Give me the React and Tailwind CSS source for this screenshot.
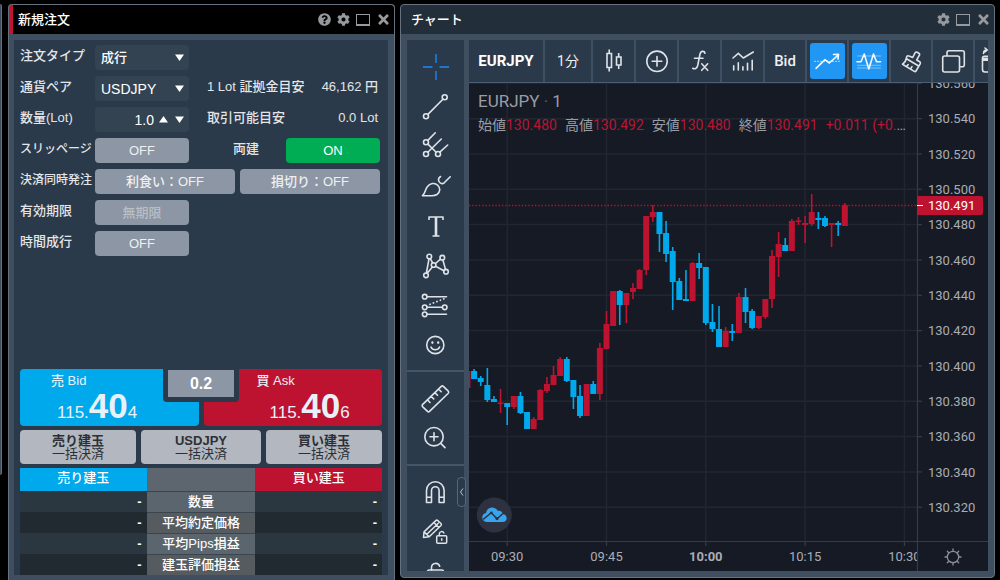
import React from "react";
import { FaQuestionCircle, FaCog, FaTimes } from "react-icons/fa";

const GLYPH = { fill: "none", stroke: "#dfe3e8", strokeWidth: 1.6, strokeLinecap: "round", strokeLinejoin: "round" };

function Glyph({ children, ...rest }) {
  return (
    <svg width="32" height="32" viewBox="0 0 32 32" aria-hidden="true" {...GLYPH} {...rest}>
      {children}
    </svg>
  );
}

function WindowButtons({ help }) {
  return (
    <div className="flex items-center gap-1.5 text-[13px] text-[#96999d]">
      {help && (
        <button type="button" aria-label="ヘルプ"><FaQuestionCircle /></button>
      )}
      <button type="button" aria-label="設定"><FaCog /></button>
      <button type="button" aria-label="最大化" className="h-3 w-3.5 border border-b-2 border-[#96999d]" />
      <button type="button" aria-label="閉じる" className="w-3"><FaTimes className="text-[15px]" /></button>
    </div>
  );
}

/* ---------- order panel ---------- */

function Caret({ up }) {
  return (
    <svg width="9" height="7" viewBox="0 0 9 7" aria-hidden="true">
      <path d={up ? "M0 6.5 4.5 0 9 6.5z" : "M0 0.5 4.5 7 9 0.5z"} fill="#fff" />
    </svg>
  );
}

function Row({ label, htmlFor, small, children }) {
  return (
    <div className="flex h-[25px] items-stretch">
      <label
        htmlFor={htmlFor}
        className={
          small
            ? "flex w-[75px] shrink-0 items-center whitespace-nowrap pb-[3px] text-xs font-medium text-[#e3e5e8]"
            : "flex w-[75px] shrink-0 items-center whitespace-nowrap pb-[3px] text-[13px] font-medium text-[#e3e5e8]"
        }
      >
        {label}
      </label>
      {children}
    </div>
  );
}

function Picker({ id, options, large }) {
  return (
    <div className="relative w-[94px] shrink-0">
      <select
        id={id}
        className={
          large
            ? "h-full w-full appearance-none rounded-sm bg-[#344351] pl-1.5 text-sm font-medium text-white"
            : "h-full w-full appearance-none rounded-sm bg-[#344351] pl-1.5 text-[13px] font-medium text-white"
        }
      >
        {options.map((o) => <option key={o}>{o}</option>)}
      </select>
      <span className="pointer-events-none absolute inset-y-0 right-[5px] flex items-center"><Caret /></span>
    </div>
  );
}

function Toggle({ id, children, disabled, wide, on }) {
  const tone = on ? "bg-[#00ad55] text-white" : disabled ? "bg-[#8c96a4] text-[#b9bfc7]" : "bg-[#8c96a4] text-[#eef0f2]";
  const width = wide ? "flex-1" : "w-[94px] shrink-0";
  return (
    <button id={id} type="button" disabled={disabled} className={`rounded-sm text-[13px] font-medium ${tone} ${width}`}>
      {children}
    </button>
  );
}

function Info({ name, value }) {
  return (
    <div className="ml-[18px] flex flex-1 items-center justify-between whitespace-nowrap pb-[3px] pr-0.5 text-[13px] font-medium text-[#e3e5e8]">
      <span>{name}</span>
      <span>{value}</span>
    </div>
  );
}

function Price({ head, tail }) {
  return (
    <span className="flex h-[34px] items-baseline text-[17px] leading-[34px]">
      {head}<b className="text-[35px]">40</b>{tail}
    </span>
  );
}

function CloseButton({ title }) {
  return (
    <button type="button" className="rounded-sm bg-[#b3b7bf] text-[13px] leading-[13px] text-[#2c3036]">
      <span className="block font-bold">{title}</span>
      <span className="block">一括決済</span>
    </button>
  );
}

function OrderPanel() {
  const rows = ["数量", "平均約定価格", "平均Pips損益", "建玉評価損益"];
  return (
    <section className="flex w-[387px] shrink-0 flex-col rounded-t border border-b-0 border-[#66717f] bg-[#3f4f60]">
      <header className="flex h-[29px] shrink-0 items-center justify-between rounded-t border-l-4 border-[#c01433] bg-black pl-[5px] pr-1.5">
        <h1 className="text-[13px] font-medium text-white">新規注文</h1>
        <WindowButtons help />
      </header>
      <div className="flex flex-1 flex-col pb-[5px] pl-[5px] pr-1.5 pt-1.5">
        <div className="flex flex-1 flex-col justify-between bg-[#2a3a4a] px-1.5 pt-[5px]">
          <form className="flex flex-col gap-1.5 pr-0.5" onSubmit={(e) => e.preventDefault()}>
            <Row label="注文タイプ" htmlFor="type"><Picker id="type" options={["成行"]} /></Row>
            <Row label="通貨ペア" htmlFor="pair">
              <Picker id="pair" options={["USDJPY"]} large />
              <Info name="1 Lot 証拠金目安" value="46,162 円" />
            </Row>
            <Row label="数量(Lot)" htmlFor="lot">
              <div className="flex w-[94px] shrink-0 items-center gap-[7px] rounded-sm bg-[#344351] pr-[5px]">
                <input id="lot" type="text" defaultValue="1.0" className="min-w-0 flex-1 bg-transparent text-right text-sm text-white" />
                <button type="button" aria-label="増やす" className="-ml-0.5"><Caret up /></button>
                <button type="button" aria-label="減らす"><Caret /></button>
              </div>
              <Info name="取引可能目安" value="0.0 Lot" />
            </Row>
            <Row label="スリッページ" htmlFor="slip" small>
              <Toggle id="slip">OFF</Toggle>
              <label htmlFor="hedge" className="flex flex-1 items-center justify-end pb-[3px] pr-[27px] text-[13px] font-medium text-[#e3e5e8]">両建</label>
              <Toggle id="hedge" on>ON</Toggle>
            </Row>
            <Row label="決済同時発注" htmlFor="profit" small>
              <div className="flex flex-1 gap-[5px]">
                <Toggle id="profit" wide>利食い：OFF</Toggle>
                <Toggle id="stop" wide>損切り：OFF</Toggle>
              </div>
            </Row>
            <Row label="有効期限" htmlFor="expiry"><Toggle id="expiry" disabled>無期限</Toggle></Row>
            <Row label="時間成行" htmlFor="timed"><Toggle id="timed">OFF</Toggle></Row>
          </form>

          <div className="mt-4 flex flex-col gap-1">
            <div className="relative grid h-[57px] grid-cols-2 grid-rows-1 gap-[5px] text-[#e9f1f8]">
              <button type="button" className="flex min-h-0 flex-col items-start rounded-sm bg-[#00a8ec] pt-[3px]">
                <span className="pl-[31px] text-[13px] leading-[17px] font-medium">売 Bid</span>
                <span className="pl-[37px]"><Price head="115." tail="4" /></span>
              </button>
              <button type="button" className="flex min-h-0 flex-col items-start rounded-sm bg-[#bd1331] pt-[3px]">
                <span className="pl-[53px] text-[13px] leading-[17px] font-medium">買 Ask</span>
                <span className="pl-[66px]"><Price head="115." tail="6" /></span>
              </button>
              <div className="absolute inset-x-0 top-0 mx-auto w-[76px] rounded-b border-x-[5px] border-b-[5px] border-t border-[#2a3a4a] bg-[#2a3a4a]">
                <output className="block bg-[#8c96a4] text-center text-base leading-[27px] font-bold text-white">0.2</output>
              </div>
            </div>
            <div className="grid h-[34px] grid-cols-[116fr_120fr_116fr] gap-[5px]">
              <CloseButton title="売り建玉" />
              <CloseButton title="USDJPY" />
              <CloseButton title="買い建玉" />
            </div>
            <table className="w-full table-fixed border-separate border-spacing-0 text-[13px] leading-5 font-medium text-white">
              <thead>
                <tr className="h-[23px]">
                  <th className="w-[35%] bg-[#00a8ec] p-0 pb-[3px] font-medium">売り建玉</th>
                  <td className="bg-[#5d666e] p-0" />
                  <th className="w-[35%] bg-[#bd1331] p-0 pb-[3px] font-medium">買い建玉</th>
                </tr>
              </thead>
              <tbody>
                {rows.map((r, i) => (
                  <tr key={r} className={i % 2 ? "h-[21px] bg-[#222a31]" : "h-[21px] bg-[#2b3740]"}>
                    <td className="p-0 pr-[5px] text-right font-bold">-</td>
                    <th className={i % 2 ? "whitespace-nowrap border-t border-[#3a454f] bg-[#565b5f] p-0 font-medium" : "whitespace-nowrap border-t border-[#3a454f] bg-[#5b656d] p-0 font-medium"}>{r}</th>
                    <td className="p-0 pr-[5px] text-right font-bold">-</td>
                  </tr>
                ))}
              </tbody>
            </table>
          </div>
        </div>
      </div>
    </section>
  );
}

/* ---------- drawing tools ---------- */

const TOOLS = [
  ["十字カーソル", (
    <Glyph stroke="#1f76cc" strokeLinecap="butt" strokeWidth="1.8"><path d="M17 3v9M17 20v9M4 16h9.5M20.500 16h9.500" /></Glyph>
  )],
  ["トレンドライン", (
    <Glyph><circle cx="25.700" cy="6.300" r="2.500" /><circle cx="7" cy="25.300" r="2.500" /><path d="M8.900 23.400 23.900 8.200" /></Glyph>
  )],
  ["ピッチフォーク", (
    <Glyph><circle cx="7" cy="12.300" r="2.500" /><circle cx="7" cy="24" r="2.500" /><circle cx="19" cy="24" r="2.500" /><path d="M8.800 10.400 16.300 2.800M8.800 22.200 22.300 9M20.800 22.200 28.700 15M8.900 14.100 17.200 22.200" /></Glyph>
  )],
  ["ブラシ", (
    <Glyph><path d="M3.500 25.700c3-2.500 2.500-6 4.800-9 2.400-3.400 7.400-4.500 10.400-1.500s2.500 7-.7 9.300c-1.600 1-3 1.200-5 1.200zM21.500 6.500c-2 1.300-2.500 3-1.500 5s3.500 2.800 5.200 1.300l6-6" /></Glyph>
  )],
  ["テキスト", (
    <Glyph strokeLinecap="butt"><path d="M10 10V7h14v3M13.500 26h7" /><path d="M17 7v19" strokeWidth="2.600" /></Glyph>
  )],
  ["パターン", (
    <Glyph><circle cx="10.300" cy="6.500" r="2.300" /><circle cx="23.300" cy="7.700" r="2.300" /><circle cx="14.600" cy="15" r="2.300" /><circle cx="27" cy="21.700" r="2.300" /><circle cx="7" cy="25.300" r="2.300" /><path d="M10 8.900 7.400 23M11.300 8.700l2.400 4.300M8.200 23.300l5.200-6.300M16.500 13.500l5-4.300M16.500 16.200l8.500 4.500M23.900 10l2.600 9.400" /></Glyph>
  )],
  ["予測", (
    <Glyph><circle cx="5.700" cy="7.700" r="2.300" /><circle cx="5.700" cy="18.300" r="2.300" /><circle cx="25.700" cy="18.300" r="2.300" /><circle cx="5.700" cy="25.300" r="2.300" /><path d="M8 7.700h19.500M8 18.300h15.400M8 25.300h19.500" /><path d="M11 15.300 27 9" strokeDasharray="0.100 3.600" strokeWidth="1.800" /></Glyph>
  )],
  ["アイコン", (
    <Glyph><circle cx="16.300" cy="16" r="8.600" /><path d="M12 18c1.500 3.600 7 3.600 8.600 0" /><path d="M13.400 13.300v.5M19.200 13.300v.5" strokeWidth="2.300" /></Glyph>
  )],
];

const MEASURE = [
  ["定規", (
    <Glyph><path d="M22.300 3.400a1.500 1.500 0 0 1 2 0l5 4.800a1.500 1.500 0 0 1 0 2L10.500 28.400a1.500 1.500 0 0 1-2 0l-5-4.800a1.500 1.500 0 0 1 0-2zM19.500 6l2.700 2.700M15.800 9.600l2.700 2.700M12 13.200l2.700 2.700M8.300 16.800 11 19.500" /></Glyph>
  )],
  ["ズーム", (
    <Glyph><circle cx="15" cy="14.700" r="9.200" /><path d="m22 21.600 4 4M15 10.700v8M11 14.700h8" /></Glyph>
  )],
];

const LOCKS = [
  ["マグネット", (
    <Glyph><path d="M7.500 26.500v-12a8.800 8.800 0 0 1 17.600 0v12h-5v-12a3.800 3.800 0 0 0-7.600 0v12zM7.500 21.300h5M20.100 21.300h5" /></Glyph>
  )],
  ["描画モード維持", (
    <Glyph strokeWidth="1.500"><path d="M4.500 21.500 5 15.900 16.800 4.600a1.500 1.500 0 0 1 2 0L22 7.500a1.500 1.500 0 0 1 0 2L10.200 20.700zM5 15.900l5.200 4.800M7.800 18.300 19.300 7.300M14.800 6.500l5.200 5" /><rect x="17.700" y="19.700" width="10" height="7.600" rx="1" /><path d="M20.300 19.500V18a2.400 2.400 0 0 1 4.600-1M22.700 22.800v1.400" /></Glyph>
  )],
  ["ロック", (
    <Glyph><rect x="8.500" y="14" width="16" height="12" rx="1.500" /><path d="M12.500 14v-2.500a4.200 4.200 0 0 1 8.200-1.200" /></Glyph>
  )],
];

function ToolGroup({ items, className }) {
  return (
    <div className={className}>
      {items.map(([name, icon]) => (
        <button key={name} type="button" aria-label={name} title={name} className="flex items-center justify-center">
          {icon}
        </button>
      ))}
    </div>
  );
}

/* ---------- top toolbar ---------- */

const TOP_TOOLS = [
  ["ローソク足", false, (
    <Glyph strokeLinecap="butt" strokeLinejoin="miter"><path d="M9 8.500h4.500v14H9zM18.500 12H23v8h-4.500zM11.200 4.500v4M11.200 22.500v4M20.700 8v4M20.700 20v4" /></Glyph>
  )],
  ["比較", false, (
    <Glyph><circle cx="16" cy="16.300" r="10.200" /><path d="M16 11.500v9.600M11.200 16.300h9.600" /></Glyph>
  )],
  ["インジケーター", false, (
    <Glyph><path d="M21 8.200c-.6-2.500-4.200-2.600-5 .8l-2.300 11.500c-.7 3-3 4-5 2.800M10.500 13.300h8.500M17.700 18.800l6 6.500M23.700 18.800l-6 6.500" /></Glyph>
  )],
  ["財務指標", false, (
    <Glyph><path d="m6 13 5.300-4.700 5 4.700L26.300 7" /><path d="M6.700 25v-4.300M11.300 25v-7.300M15.900 25v-3.300M20.500 25v-6.700M25.200 25v-9.700" /></Glyph>
  )],
  ["Bid", false, <span className="text-[15px] font-medium">Bid</span>],
  ["ライン表示", true, (
    <Glyph stroke="#f2f8fe"><path d="m5 23.300 9-8.600 4.300 3.300 8.500-7.700M22.500 9.500l5-.3-.5 5" /><path d="M3.500 16.300h25" strokeWidth="1.200" strokeDasharray="1 2" opacity="0.600" /></Glyph>
  )],
  ["波形表示", true, (
    <Glyph stroke="#f2f8fe"><path d="M4 16.700h4L11.200 9l4.600 15L20.500 9l3 7.700h4" /><path d="M4.500 11h23M4.500 20.300h23M4.500 23h23" strokeWidth="1" opacity="0.450" /></Glyph>
  )],
  ["テンプレート", false, (
    <Glyph><path d="m17.700 12.500 2.500-4.800a1.400 1.400 0 0 1 2-.5l1.700 1a1.400 1.400 0 0 1 .5 2L21.700 15l3 1.800c.8.500 1 1 .6 1.800L21 26c-.4.700-1 .8-1.700.4L7.500 19.200c2.300-1.500 3.500-3.300 4-6.600.3-1.700 1.200-2.300 2.500-1.500zM11.500 13.800 23.700 21M11.500 21.500l1.700-2M15.500 24l1.500-2.400" /></Glyph>
  )],
  ["レイアウト", false, (
    <Glyph><rect x="5.700" y="11" width="16.800" height="16" rx="2" /><path d="M10 10.500V7.800a2 2 0 0 1 2-2h13.300a2 2 0 0 1 2 2v12a2 2 0 0 1-2 2h-2.500" /></Glyph>
  )],
];

function Toolbar() {
  return (
    <nav className="flex h-[43px] shrink-0 overflow-hidden border-b border-[#4b5f74] text-[#eef0f2]">
      <button type="button" className="w-[76px] shrink-0 border-r-2 border-[#3f5062] text-[15px] font-bold text-white">EURJPY</button>
      <button type="button" className="w-12 shrink-0 border-r-2 border-[#3f5062] text-sm">1分</button>
      {TOP_TOOLS.map(([name, active, icon], i) => (
        <button
          key={name}
          type="button"
          aria-label={name}
          className={
            i < 4
              ? "flex w-[43px] shrink-0 items-center justify-center border-r-2 border-[#3f5062]"
              : "flex w-[42px] shrink-0 items-center justify-center border-r-2 border-[#3f5062]"
          }
        >
          {active ? (
            <span className="flex h-9 w-[35px] items-center justify-center rounded-[3px] bg-[#2196f3]">{icon}</span>
          ) : icon}
        </button>
      ))}
      <button type="button" aria-label="画像保存" className="flex shrink-0 items-center">
        <Glyph><path d="M7.500 15.500v-2.300a2 2 0 0 1 2-2H20M7.500 16v8.500a2.500 2.500 0 0 0 2.500 2.500h12M8.500 8.500c0-2 1-3.500 3.500-3.500M10 3l2.300 2L10 7" /><path d="M7.500 12.500h16v3.500h-16z" fill="#dfe3e8" stroke="none" /></Glyph>
      </button>
    </nav>
  );
}

/* ---------- chart ---------- */

/* u = up, d = down; body top, body bottom, wick top, wick bottom */
const CANDLES = [
  ["u", 371, 388, 371, 388], ["d", 371, 379, 369, 379], ["d", 378, 382, 376, 386], ["d", 385, 400, 368, 402],
  ["d", 399, 402, 396, 402], ["u", 402.5, 404, 389, 413], ["d", 403, 407, 403, 425], ["u", 396, 407, 396, 409],
  ["d", 396, 413, 392, 414], ["d", 412, 429, 412, 429], ["u", 419, 429, 417, 429], ["u", 390, 420, 389, 420],
  ["u", 384, 391, 377, 393], ["u", 375, 385, 366, 385], ["u", 359, 376, 357, 376], ["d", 359, 381, 357, 382],
  ["d", 380, 397, 380, 409], ["d", 396, 416, 385, 418], ["u", 384, 416, 384, 416], ["d", 384, 394, 381, 394],
  ["u", 348, 394, 343, 400], ["u", 324, 349, 311, 349], ["u", 291, 326, 291, 326], ["d", 291, 305, 290, 325],
  ["u", 293, 305, 293, 323], ["u", 288, 292, 283, 299], ["u", 270, 289, 269, 289], ["u", 216, 270, 216, 275],
  ["u", 212, 217, 205, 222], ["d", 212, 234, 212, 252], ["d", 233, 254, 221, 262], ["d", 251, 282, 247, 310],
  ["d", 281, 300, 278, 300], ["d", 299, 301, 270, 301], ["u", 263, 301, 262, 301], ["d", 263, 268, 253, 279],
  ["d", 267, 323, 267, 325], ["d", 322, 329, 304, 332], ["d", 329, 347, 306, 347], ["u", 331, 347, 327, 347],
  ["d", 331, 333, 324, 341], ["u", 297, 333, 293, 333], ["d", 297, 312, 288, 323], ["d", 311, 328, 309, 329],
  ["u", 316, 328, 316, 329], ["u", 299, 317, 299, 319], ["u", 256, 299, 250, 308], ["u", 244, 257, 232, 277],
  ["d", 245, 251, 238, 251], ["u", 221, 251, 219, 251], ["u", 220.5, 222, 217, 225], ["u", 223, 225, 216, 243],
  ["u", 212, 224, 194, 226], ["d", 218, 220, 212, 229], ["d", 218, 226, 216, 227], ["u", 223, 225, 223, 247],
  ["d", 223, 225, 221, 236], ["u", 205, 226, 203, 226],
];

const STEP = 6.62;
const PRICES = Array.from({ length: 13 }, (_, i) => ({ label: (130.56 - i * 0.02).toFixed(3), y: 83.3 + i * 35.33 }));
const TIMES = ["09:30", "09:45", "10:00", "10:15", "10:30"].map((label, i) => ({ label, x: 507.2 + i * STEP * 15 }));

function Chart() {
  return (
    <svg viewBox="469 83 519 488" preserveAspectRatio="xMinYMin meet" className="block h-full w-full font-[Roboto,sans-serif] text-[13px]" role="img" aria-label="EURJPY 1分足">
      <defs>
        <clipPath id="plot"><rect x="469" y="83" width="448" height="488" /></clipPath>
      </defs>
      <g stroke="#212630" strokeWidth="1.500">
        {PRICES.map((p) => <path key={p.label} d={`M469 ${p.y}H917`} />)}
        {TIMES.map((t) => <path key={t.label} d={`M${t.x} 83V541`} />)}
      </g>
      <g clipPath="url(#plot)">
        {CANDLES.map(([dir, top, bottom, high, low], i) => {
          const x = 507.2 + (i - 6) * STEP;
          return (
            <g key={i} fill={dir === "u" ? "#bd1331" : "#00a8ec"}>
              <rect x={x - 0.8} y={high} width="1.600" height={low - high} />
              <rect x={x - 3} y={top} width="6" height={bottom - top} />
            </g>
          );
        })}
        <path d="M469 205.500H917" stroke="#bd1331" strokeWidth="1.300" strokeDasharray="1.300 2" />
        {TIMES.map((t, i) => (
          <text key={t.label} x={t.x} y="561" textAnchor="middle" fill="#a9adb5" fontWeight={i === 2 ? 700 : 400}>{t.label}</text>
        ))}
      </g>
      <path d="M469 541.500H988M917.500 83V571" stroke="#363b47" strokeWidth="1.200" />
      <g stroke="#363b47" strokeWidth="1.200">
        {PRICES.map((p) => <path key={p.label} d={`M917 ${p.y}h5`} />)}
        {TIMES.map((t) => <path key={t.label} d={`M${t.x} 541v5`} />)}
      </g>
      {PRICES.map((p) => <text key={p.label} x="928" y={p.y + 4.7} fill="#a9adb5">{p.label}</text>)}
      <path d="M917 196h64a2 2 0 0 1 2 2v15a2 2 0 0 1-2 2h-64z" fill="#bd1331" />
      <path d="M917 205.500h6" stroke="#fff" />
      <text x="928" y="210" fill="#fff">130.491</text>
      <circle cx="494.300" cy="515" r="17.500" fill="#2e3140" />
      <path d="M486.500 522a4.500 4.500 0 0 1-4.300-4.600c0-2.500 1.600-4.200 3.800-4.500.6-3.200 2.900-5.300 6-5.300 2.600 0 4.500 1.200 5.600 3.200 2.800-.6 4.800.7 5.400 3.200 2.200.3 3.700 2 3.700 4.200 0 2.300-1.600 3.800-4 3.800z" fill="#37a6ef" />
      <path d="m483 519.500 8.300-6.800 5.700 6 7.500-6.500" fill="none" stroke="#2e3140" strokeWidth="1.500" />
      <circle cx="491.300" cy="512.900" r="1.400" fill="#2e3140" /><circle cx="497" cy="518.600" r="1.600" fill="#2e3140" />
      <g stroke="#8b8f98" fill="none" strokeWidth="1.300" strokeLinecap="round">
        <circle cx="953" cy="557" r="5.700" />
        <path d="M953 549v2M953 563v2M945 557h2M959 557h2M947.300 551.300l1.200 1.200M957.500 561.500l1.200 1.200M947.300 562.700l1.200-1.200M957.500 552.500l1.200-1.200" />
      </g>
    </svg>
  );
}

function Legend() {
  const items = [["始値", "130.480"], ["高値", "130.492"], ["安値", "130.480"], ["終値", "130.491"]];
  return (
    <div className="absolute left-[9px] right-[78px] top-2 text-[#9a9da6]">
      <h2 className="text-[17px] leading-5">EURJPY <span className="text-[#5c606b]">·</span> 1</h2>
      <p className="mt-1 truncate text-sm leading-5">
        {items.map(([k, v]) => (
          <span key={k} className="mr-2">{k}<span className="text-[#b81734]">{v}</span></span>
        ))}
        <span className="text-[#b81734]">+0.011 (+0.01%)</span>
      </p>
    </div>
  );
}

function ChartPanel() {
  return (
    <section className="mb-0.5 flex min-w-0 flex-1 flex-col rounded border border-[#66717f] bg-[#3f4f60]">
      <header className="flex h-[29px] shrink-0 items-center justify-between rounded-t bg-[#222e3a] pl-2.5 pr-1.5">
        <h1 className="text-[13px] font-medium text-white">チャート</h1>
        <WindowButtons />
      </header>
      <div className="flex min-h-0 flex-1 p-1.5">
        <aside className="relative w-[57px] shrink-0 bg-[#2a3a4a]">
          <div className="h-full overflow-hidden">
            <div className="flex h-0 flex-col">
              <ToolGroup items={TOOLS} className="mt-[7px] grid h-[325px] shrink-0 grid-rows-8 border-b-2 border-[#45566a] pb-[5px] pr-0.5" />
              <ToolGroup items={MEASURE} className="grid h-[94px] shrink-0 grid-rows-2 border-b-2 border-[#45566a] pb-1.5 pr-0.5 pt-[7px]" />
              <ToolGroup items={LOCKS} className="grid h-[126px] shrink-0 grid-rows-3 pr-0.5 pt-1.5" />
            </div>
          </div>
          <button type="button" aria-label="ツールバーを隠す" className="absolute bottom-16 -right-0.5 flex h-[30px] w-[9px] items-center justify-center rounded border border-[#56677b] bg-[#2a3a4a]">
            <svg width="5" height="8" viewBox="0 0 5 8" fill="none" stroke="#b9c0c9" aria-hidden="true"><path d="M4 .5 1.500 4 4 7.500" /></svg>
          </button>
        </aside>
        <div className="ml-[5px] flex min-w-0 flex-1 flex-col bg-[#2a3a4a] font-[Roboto,'Noto_Sans_CJK_JP',sans-serif]">
          <Toolbar />
          <div className="relative min-h-0 flex-1 overflow-hidden bg-[#161a25]">
            <Chart />
            <Legend />
          </div>
        </div>
      </div>
    </section>
  );
}

export default function App() {
  return (
    <main className="flex h-screen min-h-[540px] overflow-hidden bg-black pr-[5px] pt-1 font-['Liberation_Sans','Noto_Sans_CJK_JP',sans-serif]">
      <div className="mr-1.5 h-[471px] w-0.5 shrink-0 rounded-r-sm border-r border-[#66717f] bg-[#3f4f60]" />
      <OrderPanel />
      <div className="w-[5px] shrink-0" />
      <ChartPanel />
    </main>
  );
}
